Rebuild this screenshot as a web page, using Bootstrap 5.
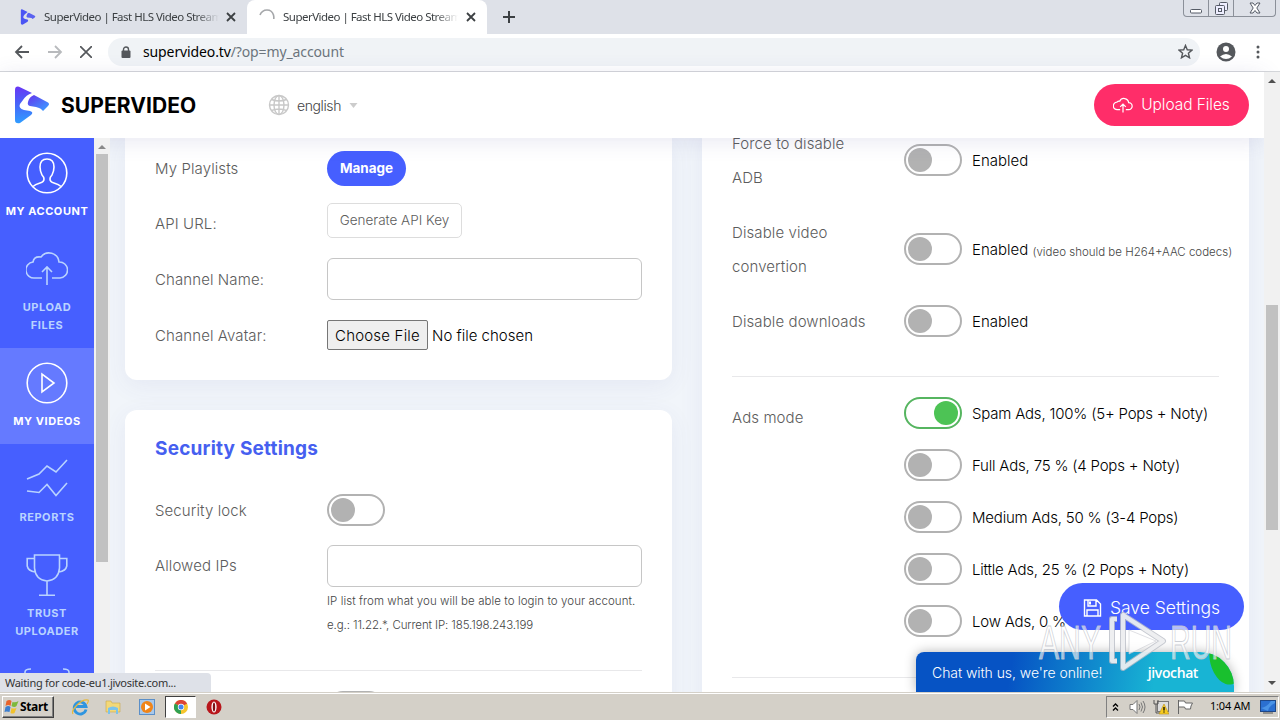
<!DOCTYPE html>
<html lang="en">
<head>
    <meta charset="UTF-8">
    <meta name="viewport" content="width=device-width, initial-scale=1.0">
    <title>SuperVideo | Fast HLS Video Streaming</title>
    <link href="https://cdn.jsdelivr.net/npm/bootstrap@5.3.3/dist/css/bootstrap.min.css" rel="stylesheet">
    <style>
        body {
            width: 1280px;
            height: 720px;
            overflow: hidden;
            font-family: Inter, "Liberation Sans", sans-serif;
            font-size: 15px;
            font-weight: 300;
            color: #000;
            background: #fff;
        }

        svg {
            display: block;
            flex: none;
        }

        .ui-font {
            font-family: "Noto Sans", "DejaVu Sans", sans-serif;
            font-weight: 400;
        }

        /* Browser chrome */
        .tab-strip {
            height: 34px;
            background: #dee1e8;
            font-size: 11.5px;
            color: #3c4043;
        }

        .browser-tab {
            width: 240px;
            height: 34px;
            padding: 0 11px 0 12px;
        }

        .browser-tab.first-tab {
            width: 243px;
        }

        .browser-tab.current {
            background: #fff;
            border-radius: 8px 8px 0 0;
        }

        .tab-title {
            width: 175px;
            overflow: hidden;
            white-space: nowrap;
            letter-spacing: -.52px;
            -webkit-mask-image: linear-gradient(90deg, #000 86%, transparent);
            mask-image: linear-gradient(90deg, #000 86%, transparent);
        }

        .window-buttons {
            width: 93px;
            height: 17px;
            border: 1px solid #8b9099;
            border-top: 0;
            border-radius: 0 0 4px 4px;
            margin-right: 4px;
        }

        .window-buttons > span {
            height: 16px;
            width: 25px;
            border-right: 1px solid #8b9099;
        }

        .window-buttons > span:last-child {
            width: 41px;
            border-right: 0;
        }

        .toolbar-row {
            height: 38px;
            border-bottom: 1px solid #d5d7da;
            padding: 0 14px 2px 14px;
        }

        .address-bar {
            height: 28px;
            border-radius: 14px;
            background: #f0f3f6;
            margin-left: 16px;
            margin-right: 16px;
            padding: 0 7px 0 13px;
            font-size: 14px;
        }

        .url-text {
            letter-spacing: -.12px;
        }

        /* Page */
        .viewport-row {
            height: 620px;
        }

        .site-header {
            height: 66px;
            z-index: 2;
            background: #fff;
            box-shadow: 0 3px 22px rgba(70, 70, 150, .13);
            padding: 0 15px 0 14px;
        }

        .brand-name {
            font-size: 21px;
            font-weight: 700;
            letter-spacing: .07px;
            margin-left: 11px;
            padding-top: 2px;
            width: 207px;
        }

        .lang-label {
            font-size: 14px;
            letter-spacing: -.4px;
            color: #444;
            margin-left: 7px;
        }

        .upload-btn {
            width: 155px;
            height: 42px;
            border-radius: 21px;
            background: #ff2d69;
            color: #fff;
            font-size: 15.5px;
            letter-spacing: -.05px;
        }

        .side-menu {
            width: 94px;
            height: 554px;
            background: #465fff;
            z-index: 3;
            overflow: hidden;
        }

        .side-item {
            height: 96px;
            flex: none;
            padding-top: 14px;
            color: #b9d3ff;
            font-size: 11px;
            font-weight: 700;
            line-height: 18px;
            letter-spacing: .55px;
            text-align: center;
        }

        .side-item.tall {
            height: 114px;
        }

        .side-item.lit {
            color: #fff;
        }

        .side-item.current {
            background: #657aff;
        }

        .side-item svg {
            margin: 0 auto 8px;
        }

        .scroll-track {
            width: 16px;
            flex: none;
            background: #f1f1f1;
            z-index: 3;
        }

        .scroll-thumb {
            width: 12px;
            background: #c1c1c1;
        }

        .main-area {
            background: #f1f5fa;
            padding: 0 15px;
            gap: 30px;
            height: 554px;
            overflow: hidden;
        }

        .main-col {
            width: 547px;
        }

        .panel {
            background: #fff;
            box-shadow: 0 6px 24px rgba(70, 70, 150, .07);
            padding: 0 30px;
        }

        .panel-playlist {
            height: 242px;
            border-radius: 0 0 12px 12px;
            padding-top: 13px;
        }

        .panel-security {
            height: 330px;
            margin-top: 30px;
            border-radius: 12px;
        }

        .panel-right {
            height: 600px;
            margin-top: -11px;
        }

        .field-label {
            width: 172px;
            flex: none;
            color: #5c5c5c;
            letter-spacing: .1px;
            line-height: 34px;
        }

        .nudge {
            padding-top: 2px;
        }

        .manage-btn {
            width: 79px;
            height: 35px;
            border-radius: 18px;
            background: #465fff;
            color: #fff;
            font-size: 13.5px;
            font-weight: 700;
        }

        .api-btn {
            width: 135px;
            height: 35px;
            border: 1px solid #ddd;
            border-radius: 5px;
            color: #5c5c5c;
            font-size: 13.5px;
        }

        .text-field {
            width: 315px;
            height: 42px;
            border: 1px solid #c6c6c6;
            border-radius: 6px;
        }

        .file-btn {
            width: 101px;
            height: 30px;
            border: 1px solid #767676;
            border-radius: 2px;
            background: #efefef;
            letter-spacing: .2px;
        }

        .section-title {
            font-size: 19px;
            font-weight: 700;
            letter-spacing: .2px;
            color: #465ff0;
            line-height: 34px;
            padding-top: 22px;
            margin: 0;
        }

        .help-text {
            font-size: 11.5px;
            line-height: 24px;
            color: #444;
        }

        .help-ip {
            letter-spacing: .07px;
        }

        .help-example {
            letter-spacing: -.1px;
        }

        .help-codecs {
            position: relative;
            top: 1px;
        }

        .pill-switch {
            width: 58px;
            height: 32px;
            flex: none;
            border: 2px solid #b2b2b2;
            border-radius: 16px;
            padding: 2px;
            margin-right: 10px;
            background: #fff;
        }

        .pill-switch::before {
            content: "";
            display: block;
            width: 24px;
            height: 24px;
            border-radius: 50%;
            background: #b2b2b2;
        }

        .pill-switch.on {
            border-color: #56b560;
        }

        .pill-switch.on::before {
            margin-left: 26px;
            background: #4dc355;
        }

        .pill-switch.raised {
            margin-bottom: 2px;
        }

        .divider {
            height: 1px;
            background: #e8e8ea;
        }

        .opt-row {
            height: 32px;
            margin-bottom: 20px;
            white-space: nowrap;
            letter-spacing: -.2px;
        }

        /* Floating items */
        .save-btn {
            left: 1059px;
            top: 583px;
            width: 185px;
            height: 47px;
            padding-top: 3px;
            border-radius: 24px;
            background: #465fff;
            color: #fff;
            font-size: 17.5px;
            z-index: 5;
        }

        .chat-bar {
            left: 916px;
            top: 652px;
            width: 318px;
            height: 40px;
            padding: 0 36px 0 16px;
            border-radius: 8px 34px 0 0;
            background: linear-gradient(100deg, #0653c4 30%, #18b4d4 75%);
            box-shadow: 0 0 12px rgba(0, 0, 0, .3);
            color: #fff;
            overflow: hidden;
            z-index: 5;
        }

        .chat-text {
            font-size: 14px;
            letter-spacing: -.06px;
        }

        .jivo-text {
            font-family: "Open Sans", "Noto Sans", sans-serif;
            font-size: 14px;
            font-weight: 600;
            letter-spacing: -.4px;
        }

        .chat-leaf {
            right: -8px;
            top: -17px;
            width: 32px;
            height: 50px;
            border-radius: 50%;
            background: #19c02e;
            transform: rotate(-14deg);
        }

        .any-mark {
            left: 1036px;
            top: 610px;
            z-index: 8;
        }

        .status-bubble {
            left: 0;
            top: 673px;
            width: 211px;
            height: 19px;
            padding-left: 5px;
            border-radius: 0 4px 0 0;
            background: #dee1e8;
            font-size: 11px;
            line-height: 20px;
            letter-spacing: -.28px;
            color: #333;
            z-index: 6;
        }

        /* Taskbar */
        .task-bar {
            height: 28px;
            background: #d4d0c8;
            border-top: 1px solid #d4d0c8;
            box-shadow: inset 0 1px #fff;
            font-size: 11px;
            color: #000;
            z-index: 7;
        }

        .start-btn {
            width: 52px;
            height: 22px;
            margin: 0 0 0 2px;
            border: 1px solid;
            border-color: #fff #404040 #404040 #fff;
            box-shadow: inset -1px -1px #808080;
            font-weight: 700;
            font-size: 12px;
            letter-spacing: -.35px;
        }

        .task-app {
            width: 31px;
            height: 22px;
            background: #fff;
            border: 1px solid;
            border-color: #404040 #fff #fff #404040;
        }

        .tray {
            width: 173px;
            height: 22px;
            border: 1px solid;
            border-color: #808080 #fff #fff #808080;
            margin: 0 1px 0 0;
            padding: 0 2px 0 5px;
        }

        .clock-text {
            font-size: 11px;
            letter-spacing: -.2px;
        }
    </style>
</head>
<body class="d-flex flex-column position-relative">

    <!-- Tabs -->
    <div class="tab-strip ui-font d-flex">
        <div class="browser-tab first-tab d-flex align-items-center ms-1">
            <svg class="ms-1" width="16" height="16" viewBox="0 0 36 38"><path d="M1 3Q1 0 5 1l12 6-7 6q-7 8 1 11l6 1q3 2 0 5L6 37q-5 1-5-3z" fill="#4b55f4"/><path d="M20 9l14 7q3 2 0 4l-5 4q-2-3-7-3l-6-1q-3-1-1-5 1-5 5-6z" fill="#5a62f0"/></svg>
            <span class="tab-title ms-2">SuperVideo | Fast HLS Video Streaming</span>
            <svg class="ms-auto" width="10" height="10" viewBox="0 0 10 10" stroke="#3c4043" stroke-width="1.8"><path d="M1 1l8 8M9 1L1 9"/></svg>
        </div>
        <div class="browser-tab current d-flex align-items-center">
            <svg width="16" height="16" viewBox="0 0 16 16" fill="none" stroke="#a5a7aa" stroke-width="1.6"><path d="M1 6Q3 1 8 1t6.500 5q.5 2 .3 4"/></svg>
            <span class="tab-title ms-2">SuperVideo | Fast HLS Video Streaming</span>
            <svg class="ms-auto" width="10" height="10" viewBox="0 0 10 10" stroke="#3c4043" stroke-width="1.8"><path d="M1 1l8 8M9 1L1 9"/></svg>
        </div>
        <svg class="align-self-center ms-3" width="12" height="12" viewBox="0 0 12 12" stroke="#3c4043" stroke-width="2"><path d="M6 0v12M0 6h12"/></svg>
        <div class="window-buttons d-flex ms-auto">
            <span class="d-flex align-items-center justify-content-center"><svg width="12" height="14" viewBox="0 0 12 14" fill="#fff" stroke="#555b66"><rect x=".5" y="8.500" width="11" height="3.500" rx="1"/></svg></span>
            <span class="d-flex align-items-center justify-content-center"><svg width="13" height="13" viewBox="0 0 13 13" fill="#eef" stroke="#555b66"><rect x="4.500" y=".5" width="8" height="8" rx="1"/><rect x=".5" y="3.500" width="9" height="9" rx="1"/><rect x="3.500" y="6.500" width="3" height="3"/></svg></span>
            <span class="d-flex align-items-center justify-content-center"><svg width="12" height="12" viewBox="0 0 12 12" fill="#fff" stroke="#555b66"><path d="M1 1h3l2 2.500L8 1h3L7.800 6 11 11H8L6 8.500 4 11H1l3.200-5z"/></svg></span>
        </div>
    </div>

    <!-- Address row -->
    <div class="toolbar-row d-flex align-items-center">
        <svg width="16" height="14" viewBox="0 0 16 14" fill="none" stroke="#55585c" stroke-width="1.8"><path d="M15 7H2M8 1L2 7l6 6"/></svg>
        <svg width="16" height="14" style="margin-left: 17px" viewBox="0 0 16 14" fill="none" stroke="#b8babd" stroke-width="1.8"><path d="M1 7h13M8 1l6 6-6 6"/></svg>
        <svg width="12" height="12" style="margin-left: 17px" viewBox="0 0 12 12" stroke="#55585c" stroke-width="1.7"><path d="M0 0l12 12M12 0L0 12"/></svg>
        <div class="address-bar ui-font d-flex align-items-center flex-grow-1">
            <svg width="10" height="12" viewBox="0 0 10 12"><rect y="4.500" x=".5" width="9" height="7.500" rx="1" fill="#55585c"/><path d="M2.500 5V3.500a2.500 2.500 0 0 1 5 0V5" fill="none" stroke="#55585c" stroke-width="1.400"/></svg>
            <span class="url-text ms-2 ps-1">supervideo.tv<span class="text-secondary">/?op=my_account</span></span>
            <svg class="ms-auto" width="15" height="15" viewBox="0 0 16 16" fill="none" stroke="#55585c" stroke-width="1.500"><path d="M8 1.500l1.900 4.600 5 .4-3.800 3.300 1.200 4.900L8 12.100l-4.300 2.600 1.200-4.900L1.100 6.500l5-.4z"/></svg>
        </div>
        <svg width="20" height="20" viewBox="0 0 20 20"><circle cx="10" cy="10" r="9.500" fill="#55585c"/><circle cx="10" cy="7" r="3" fill="#fff"/><path d="M4 14.500q6-5 12 0-6 5-12 0" fill="#fff"/></svg>
        <svg width="4" height="14" style="margin: 0 6px 0 20px" viewBox="0 0 4 14" fill="#55585c"><circle cx="2" cy="2" r="1.500"/><circle cx="2" cy="7" r="1.500"/><circle cx="2" cy="12" r="1.500"/></svg>
    </div>

    <div class="viewport-row d-flex">
        <div class="d-flex flex-column" style="width: 1264px">
            <!-- Site header -->
            <header class="site-header d-flex align-items-center position-relative">
                <svg width="36" height="38" viewBox="0 0 36 38">
                    <defs>
                        <linearGradient id="lg" gradientUnits="userSpaceOnUse" x1="6" y1="0" x2="9" y2="37"><stop offset="0" stop-color="#6a35f5"/><stop offset=".4" stop-color="#4b5cf8"/><stop offset="1" stop-color="#2f9dff"/></linearGradient>
                        <linearGradient id="lg2" gradientUnits="userSpaceOnUse" x1="17" y1="8" x2="29" y2="25"><stop offset="0" stop-color="#6238ee"/><stop offset="1" stop-color="#3f94ff"/></linearGradient>
                    </defs>
                    <path d="M1 4Q1 0 5 .7L18 7Q12 9 9 14l-3 4q-2 4 4 6l6 1q4 1 1 4L6 37q-5 1-5-3z" fill="url(#lg)"/>
                    <path d="M20 9l14 7.500q2 1.500 0 3.500l-5 5q-2-3-7-4l-6-1q-3-1-2-4 1-5 6-7z" fill="url(#lg2)"/>
                </svg>
                <span class="brand-name">SUPERVIDEO</span>
                <svg width="22" height="22" viewBox="0 0 22 22" fill="none" stroke="#c8c8c8" stroke-width="1.400"><circle cx="11" cy="11" r="9.500"/><ellipse cx="11" cy="11" rx="5" ry="9.500"/><path d="M11 1.500v19M1.500 11h19M3.500 5.500q7.500 3 15 0M3.500 16.500q7.500-3 15 0"/></svg>
                <span class="lang-label">english</span>
                <svg class="ms-2" width="9" height="5" viewBox="0 0 8 5"><path d="M0 0h8L4 5z" fill="#ccc"/></svg>
                <div class="upload-btn d-flex align-items-center justify-content-center ms-auto">
                    <svg width="20" height="16" class="me-2" viewBox="0 0 42 34" fill="none" stroke="#fff" stroke-width="2.600"><path d="M15 27H9a8 8 0 0 1-1-16q3-3 6-2a10 10 0 0 1 19 3 7.500 7.500 0 0 1 0 15h-6M21 33V15M15 21l6-6 6 6"/></svg>
                    <span>Upload Files</span>
                </div>
            </header>

            <div class="d-flex">
                <!-- Side menu -->
                <nav class="side-menu d-flex flex-column">
                    <div class="side-item lit">
                        <svg width="42" height="42" viewBox="0 0 42 42" fill="none" stroke="#fff" stroke-width="1.600"><circle cx="21" cy="21" r="19.800"/><path d="M7 34.500q2-2 7-3.500 4-1 4-4 0-2-2-4-2-4-2-8 0-8 7-8t7 8q0 4-2 8-2 2-2 4 0 3 4 4 5 1.500 7 3.500"/></svg>
                        MY ACCOUNT
                    </div>
                    <div class="side-item tall">
                        <svg width="42" height="42" viewBox="0 0 42 42" fill="none" stroke="#b9d3ff" stroke-width="1.600"><path d="M16 30H9A8 8 0 0 1 7 14q1-6 8-5a10 10 0 0 1 18 5 8 8 0 0 1 1 16h-8M21 37V19M16 24l5-5 5 5"/></svg>
                        UPLOAD<br>FILES
                    </div>
                    <div class="side-item lit current">
                        <svg width="42" height="42" viewBox="0 0 42 42" fill="none" stroke="#fff" stroke-width="1.600"><circle cx="21" cy="21" r="19.800"/><path d="M16 12v18l12-9z"/></svg>
                        MY VIDEOS
                    </div>
                    <div class="side-item">
                        <svg width="42" height="42" viewBox="0 0 42 42" fill="none" stroke="#b9d3ff" stroke-width="1.600"><path d="M1 21l12-5 8-8 9 6L41 2M1 33l12 1.500 8-8 9 11L41 25"/></svg>
                        REPORTS
                    </div>
                    <div class="side-item tall">
                        <svg width="42" height="42" viewBox="0 0 42 42" fill="none" stroke="#b9d3ff" stroke-width="1.600"><path d="M8.500 1h25v13q-1 12-12.500 13Q9.500 26 8.500 14zM8.500 4.500H1.200V12q1 5 8 6M33.500 4.500h7.300V12q-1 5-8 6M21 27v14M13 41.200h16"/></svg>
                        TRUST<br>UPLOADER
                    </div>
                    <div class="side-item">
                        <svg width="46" height="42" viewBox="-2 0 46 42" fill="none" stroke="#b9d3ff" stroke-width="1.600"><path d="M-1 10V4q0-3 6-3M43 10V4q0-3-6-3"/></svg>
                    </div>
                </nav>
                <div class="scroll-track d-flex flex-column align-items-center">
                    <svg width="8" height="16" viewBox="0 0 8 16"><path d="M0 11l4-4 4 4z" fill="#8a8a8a"/></svg>
                    <div class="scroll-thumb" style="height: 408px"></div>
                </div>

                <!-- Settings -->
                <main class="main-area d-flex flex-grow-1">
                    <div class="main-col">
                        <section class="panel panel-playlist">
                            <div class="d-flex align-items-center" style="height: 35px">
                                <span class="field-label">My Playlists</span>
                                <span class="manage-btn d-flex align-items-center justify-content-center">Manage</span>
                            </div>
                            <div class="d-flex" style="height: 35px; margin-top: 17px">
                                <span class="field-label pt-1">API URL:</span>
                                <span class="api-btn d-flex align-items-center justify-content-center">Generate API Key</span>
                            </div>
                            <div class="d-flex align-items-center" style="margin-top: 20px">
                                <span class="field-label nudge">Channel Name:</span>
                                <span class="text-field"></span>
                            </div>
                            <div class="d-flex align-items-center" style="height: 30px; margin-top: 20px">
                                <span class="field-label nudge">Channel Avatar:</span>
                                <span class="file-btn nudge d-flex align-items-center justify-content-center">Choose File</span>
                                <span class="ms-1 nudge">No file chosen</span>
                            </div>
                        </section>

                        <section class="panel panel-security">
                            <h3 class="section-title">Security Settings</h3>
                            <div class="d-flex align-items-center" style="height: 32px; margin-top: 28px">
                                <span class="field-label nudge">Security lock</span>
                                <span class="pill-switch"></span>
                            </div>
                            <div class="d-flex" style="margin-top: 19px">
                                <span class="field-label" style="padding-top: 4px">Allowed IPs</span>
                                <div>
                                    <div class="text-field"></div>
                                    <div class="help-text text-nowrap" style="padding-top: 2px"><span class="help-ip">IP list from what you will be able to login to your account.</span><br><span class="help-example">e.g.: 11.22.*, Current IP: 185.198.243.199</span></div>
                                </div>
                            </div>
                            <div class="divider" style="margin-top: 33px"></div>
                            <div class="d-flex" style="margin-top: 20px; padding-left: 172px"><span class="pill-switch"></span></div>
                        </section>
                    </div>

                    <div class="main-col">
                        <section class="panel panel-right">
                            <div class="d-flex align-items-center">
                                <span class="field-label">Force to disable<br>ADB</span>
                                <span class="pill-switch raised"></span><span>Enabled</span>
                            </div>
                            <div class="d-flex align-items-center" style="margin-top: 21px">
                                <span class="field-label">Disable video<br>convertion</span>
                                <span class="pill-switch raised"></span><span class="text-nowrap nudge">Enabled <span class="help-text help-codecs">(video should be H264+AAC codecs)</span></span>
                            </div>
                            <div class="d-flex align-items-center" style="height: 34px; margin-top: 20px">
                                <span class="field-label nudge">Disable downloads</span>
                                <span class="pill-switch"></span><span class="nudge">Enabled</span>
                            </div>
                            <div class="divider" style="margin: 38px 0 20px"></div>
                            <div class="d-flex">
                                <span class="field-label" style="padding-top: 4px">Ads mode</span>
                                <div>
                                    <div class="opt-row d-flex align-items-center"><span class="pill-switch on"></span><span class="nudge">Spam Ads, 100% (5+ Pops + Noty)</span></div>
                                    <div class="opt-row d-flex align-items-center"><span class="pill-switch"></span><span class="nudge">Full Ads, 75 % (4 Pops + Noty)</span></div>
                                    <div class="opt-row d-flex align-items-center"><span class="pill-switch"></span><span class="nudge">Medium Ads, 50 % (3-4 Pops)</span></div>
                                    <div class="opt-row d-flex align-items-center"><span class="pill-switch"></span><span class="nudge">Little Ads, 25 % (2 Pops + Noty)</span></div>
                                    <div class="opt-row d-flex align-items-center"><span class="pill-switch"></span><span class="nudge">Low Ads, 0 %</span></div>
                                </div>
                            </div>
                            <div class="divider" style="margin-top: 20px"></div>
                        </section>
                    </div>
                </main>
            </div>
        </div>
        <div class="scroll-track d-flex flex-column align-items-center">
            <svg width="8" height="16" viewBox="0 0 8 16"><path d="M0 11l4-4 4 4z" fill="#505050"/></svg>
            <div class="scroll-thumb" style="height: 225px; margin-top: 217px"></div>
            <svg class="mt-auto" width="8" height="16" viewBox="0 0 8 16"><path d="M0 5h8L4 9z" fill="#505050"/></svg>
        </div>
    </div>

    <div class="save-btn position-absolute d-flex align-items-center justify-content-center">
        <svg width="19" height="18" class="me-2" viewBox="0 0 18 18" fill="none" stroke="#fff" stroke-width="1.400"><path d="M1 1h12l4 4v12H1zM4.500 1v6h8V1M3.500 17v-6h11v6"/><path d="M6.500 2.500v3" stroke-width="2"/></svg>
        <span>Save Settings</span>
    </div>

    <div class="chat-bar position-absolute d-flex align-items-center justify-content-between">
        <span class="chat-text">Chat with us, we're online!</span>
        <span class="jivo-text">jivochat</span>
        <span class="chat-leaf position-absolute"></span>
    </div>

    <svg class="any-mark position-absolute" width="200" height="64" viewBox="0 0 200 64">
        <g fill="#fff" fill-opacity=".6" stroke="#c4c7ce" stroke-opacity=".85" stroke-width="1" font-family="Liberation Sans" font-size="49">
            <text x="3" y="49" textLength="62" lengthAdjust="spacingAndGlyphs">ANY</text>
            <text x="134" y="49" textLength="62" lengthAdjust="spacingAndGlyphs">RUN</text>
        </g>
        <g fill="none" stroke-linejoin="round">
            <path d="M81 9h-5v42h5M87 5v53l40-27z" stroke="#b9bdc6" stroke-opacity=".8" stroke-width="6"/>
            <path d="M81 9h-5v42h5M87 5v53l40-27z" stroke="#fff" stroke-opacity=".7" stroke-width="4"/>
            <path d="M93 20v24l27-13z" fill="#fff" fill-opacity=".75" stroke="#c9ccd2" stroke-opacity=".6"/>
        </g>
    </svg>

    <div class="status-bubble ui-font position-absolute">Waiting for code-eu1.jivosite.com...</div>

    <!-- Taskbar -->
    <footer class="task-bar ui-font d-flex align-items-center">
        <div class="start-btn d-flex align-items-center">
            <svg width="17" height="16" viewBox="0 0 16 16"><path d="M3 2q3-2 5 0L7 7Q5 5 2 7z" fill="#e8642c"/><path d="M9 3q3 1 6-1l-2 5q-2 2-5 0z" fill="#7eb93c"/><path d="M2 8q3-2 5 0l-1 5q-3-1-5 0z" fill="#3c7fd0"/><path d="M8 9q2 1 5 0l-2 5q-2 1-4 0z" fill="#f2c22c"/></svg>
            <span>Start</span>
        </div>
        <svg width="18" height="18" style="margin-left: 17px" viewBox="0 0 18 18" fill="none"><path d="M15 11.500A6 6 0 1 1 15 8.500H5" stroke="#2e95e0" stroke-width="2.800"/><path d="M2 16Q0 13 6 7t11-5q1 1-1 4" stroke="#e8b93a" stroke-width="1.200"/></svg>
        <svg width="16" height="16" style="margin-left: 16px" viewBox="0 0 16 16"><path d="M1 2h5l1 2h8v9H1z" fill="#f3d878" stroke="#c9a94a" stroke-width=".6"/><path d="M3 15V9q5-3 10 0v6h-2v-4H5v4z" fill="#7cc3ea"/></svg>
        <svg width="16" height="16" style="margin-left: 18px" viewBox="0 0 16 16"><rect x=".5" y=".5" width="15" height="15" fill="#a8c8ea" stroke="#5b8fc8"/><circle cx="8" cy="8" r="6" fill="#f08418"/><path d="M6 4.500v7L11.500 8z" fill="#fff"/></svg>
        <div class="task-app d-flex align-items-center justify-content-center" style="margin-left: 10px">
            <svg width="14" height="14" viewBox="0 0 14 14"><circle cx="7" cy="7" r="7" fill="#f6c52d"/><path d="M7 7L.9 3.500A7 7 0 0 1 13.100 3.500z" fill="#dc4437"/><path d="M7 7l0 7A7 7 0 0 1 .9 3.500z" fill="#2fa052"/><circle cx="7" cy="7" r="3.200" fill="#fff"/><circle cx="7" cy="7" r="2.500" fill="#4485f0"/></svg>
        </div>
        <svg width="16" height="16" style="margin-left: 10px" viewBox="0 0 16 16"><circle cx="8" cy="8" r="7.500" fill="#b8161b"/><ellipse cx="8" cy="8" rx="2.600" ry="5.500" fill="#fff"/><ellipse cx="8" cy="8" rx="1.200" ry="4.500" fill="#801015"/></svg>
        <div class="tray d-flex align-items-center ms-auto">
            <svg width="7" height="10" viewBox="0 0 7 10" fill="none" stroke="#000" stroke-width="1.300"><path d="M1 4.500L3.500 2 6 4.500M1 8.500L3.500 6 6 8.500"/></svg>
            <svg width="17" height="16" style="margin-left: 10px" viewBox="0 0 17 16" fill="#fff" stroke="#777"><path d="M1 5.500h3l4-4v13l-4-4H1z"/><path d="M10 5q2 3 0 6M12 3.500q3 4.500 0 9M14 2q4 6 0 12" fill="none"/></svg>
            <svg width="16" height="16" style="margin-left: 7px" viewBox="0 0 16 16"><rect x="4.500" y="2.500" width="11" height="10" fill="#ddd" stroke="#777"/><path d="M1 1v4h4V1M3 5v9h4" stroke="#555" fill="none"/><path d="M11 5l5 10H6z" fill="#f8cc20" stroke="#b8901c" stroke-width=".6"/><path d="M11 8v3.500m0 1v1" stroke="#000" stroke-width="1.300"/></svg>
            <svg width="16" height="16" style="margin-left: 8px" viewBox="0 0 16 16" fill="#fff" stroke="#666"><path d="M1.500 1v14M1.500 2h6l1 2h7q-2 3-2 6h-5l-1-2h-6z"/></svg>
            <span class="clock-text" style="margin-left: 17px">1:04 AM</span>
            <svg class="ms-auto" width="16" height="14" viewBox="0 0 16 14"><rect x=".5" y=".5" width="15" height="11" fill="#2b6fd0" stroke="#1f4787"/><path d="M1 8q6-1 10-7h4v2Q9 6 8 11z" fill="#4a93e6"/><path d="M3 13h10" stroke="#555"/></svg>
        </div>
    </footer>

    <script src="https://cdn.jsdelivr.net/npm/bootstrap@5.3.3/dist/js/bootstrap.bundle.min.js"></script>
</body>
</html>
